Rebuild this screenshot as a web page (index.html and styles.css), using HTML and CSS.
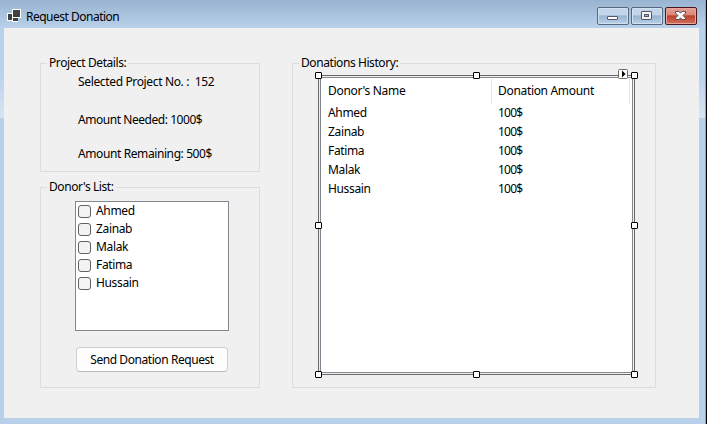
FILE: index.html
```html
<!DOCTYPE html>
<html lang="en">
<head>
<meta charset="utf-8">
<title>Request Donation</title>
<link rel="stylesheet" href="styles.css">
</head>
<body>
<div class="window">
  <header class="titlebar">
    <svg class="app-icon" width="14" height="13" viewBox="0 0 14 13" shape-rendering="crispEdges">
      <path fill="#fff" d="M5 0h9v9h-3v4H5v-1H0V4h5z"/>
      <path fill="#404040" d="M6 1h7v7H6zM1 5h4v6H1zM6 9h5v3H6z"/>
    </svg>
    <h1 class="title">Request Donation</h1>
    <div class="controls">
      <button class="control" aria-label="Minimize"><svg width="32" height="18" viewBox="0 0 32 18"><rect x="10.5" y="9.5" width="10" height="3" rx=".5" fill="#fff" stroke="#535666"/></svg></button>
      <button class="control" aria-label="Maximize"><svg width="32" height="18" viewBox="0 0 32 18"><rect x="10.5" y="4.5" width="10" height="8" rx=".5" fill="#f5f5f5" stroke="#535666"/><rect x="13.500" y="7.500" width="4" height="2" fill="#9cb8d8" stroke="#535666"/></svg></button>
      <button class="control close" aria-label="Close"><svg width="32" height="18" viewBox="0 0 32 18"><path d="M10.500 4.500h3.500l1.500 1.700 1.500-1.700h3.500v1.500l-2.500 2.500 2.500 2.500v1.500h-3.500l-1.500-1.700-1.500 1.700h-3.500v-1.500l2.500-2.500-2.500-2.500z" fill="#fff" stroke="#58505c"/></svg></button>
    </div>
  </header>
  <main class="client">
    <div class="column">
      <section class="group details">
        <h2 class="legend">Project Details:</h2>
        <p class="t-selected">Selected Project No. :&nbsp; 152</p>
        <p class="t-needed">Amount Needed: 1000$</p>
        <p class="t-remaining">Amount Remaining: 500$</p>
      </section>
      <section class="group donors">
        <h2 class="legend">Donor's List:</h2>
        <ul class="checklist">
          <li><i class="box"></i><span>Ahmed</span></li>
          <li><i class="box"></i><span>Zainab</span></li>
          <li><i class="box"></i><span>Malak</span></li>
          <li><i class="box"></i><span>Fatima</span></li>
          <li><i class="box"></i><span>Hussain</span></li>
        </ul>
        <button class="send"><span>Send Donation Request</span></button>
      </section>
    </div>
    <section class="group history">
      <h2 class="legend">Donations History:</h2>
      <div class="selection">
        <div class="listview">
          <div class="head"><span>Donor's Name</span><span>Donation Amount</span></div>
          <div class="row"><span>Ahmed</span><span class="amount">100$</span></div>
          <div class="row"><span>Zainab</span><span class="amount">100$</span></div>
          <div class="row"><span>Fatima</span><span class="amount">100$</span></div>
          <div class="row"><span>Malak</span><span class="amount">100$</span></div>
          <div class="row"><span>Hussain</span><span class="amount">100$</span></div>
        </div>
        <i class="handle top left"></i><i class="handle top center"></i><i class="handle top right"></i>
        <i class="handle middle left"></i><i class="handle middle right"></i>
        <i class="handle bottom left"></i><i class="handle bottom center"></i><i class="handle bottom right"></i>
        <svg class="tag" width="10" height="10" viewBox="0 0 10 10"><rect x=".5" y=".5" width="9" height="9" rx="1" fill="#fff" stroke="#6b6b60"/><path d="M4 1.500v7L7.500 5z" fill="#000"/></svg>
      </div>
    </section>
  </main>
</div>
</body>
</html>
```
FILE: styles.css
```css
* { box-sizing: border-box; margin: 0; padding: 0; }
body {
  width: 707px; height: 424px; overflow: hidden; background: #b9d0ea;
  font: 12px/16px "Noto Sans", "Open Sans", sans-serif; color: #000;
  letter-spacing: -0.35px; white-space: nowrap;
}
h1, h2 { font-size: 12px; font-weight: 400; }
ul { list-style: none; }
button { font: inherit; letter-spacing: inherit; color: inherit; }
.window {
  width: 707px; height: 424px; padding: 0 8px 6px 4px;
  background:
    linear-gradient(#000, #000) 706px 0 / 1px 100% no-repeat,
    linear-gradient(#3cc6e2, #3cc6e2) 705px 0 / 1px 100% no-repeat,
    linear-gradient(#99b4d1 0, #b9d1ea 28px, #bad2ec 75px, #d7e5f4 118px, #b9d0ea 118px);
}
.titlebar { height: 28px; display: flex; align-items: flex-start; }
.app-icon { margin: 9px 0 0 3px; }
.title { margin: 9px 0 0 5px; letter-spacing: -0.5px; }
.controls { display: flex; gap: 2px; margin: 7px 2px 0 auto; }
.control {
  width: 32px; height: 18px; border: 1px solid #56677e; border-radius: 2px;
  box-shadow: inset 0 0 0 1px #d3e2f1;
  background: linear-gradient(#c3d5e8 0 45%, #98b3cf 48%, #bad1e8);
}
.control svg { display: block; margin: -1px; }
.control.close {
  border-color: #4c1520; box-shadow: inset 0 0 0 1px #e7a79c;
  background: linear-gradient(#e3a298 0, #d98575 45%, #b9402b 48%, #d3705b);
}
.client { width: 695px; height: 390px; padding: 35px 43px 30px 36px; background: #f0f0f0; display: flex; gap: 32px; }
.column { width: 220px; display: flex; flex-direction: column; gap: 15px; }
.group { border: 1px solid #dcdcdc; }
.legend { width: fit-content; height: 16px; margin: -9px 0 0 6px; padding: 0 2px; background: #f0f0f0; letter-spacing: -0.42px; }
.details { height: 109px; }
.details p { margin-left: 37px; }
.t-selected { margin-top: 3px; }
.t-needed { margin-top: 22px; letter-spacing: -0.45px; }
.t-remaining { margin-top: 18px; letter-spacing: -0.4px; }
.donors { height: 201px; }
.checklist { width: 154px; height: 130px; margin: 6px 0 0 34px; padding: 0 2px; background: #fff; border: 1px solid #828790; }
.checklist li { height: 18px; display: flex; align-items: center; gap: 5px; }
.box { width: 13px; height: 13px; border: 1px solid #626262; border-radius: 3px; background: #f3f3f3; }
.send { display: block; width: 152px; height: 25px; margin: 16px 0 0 35px; background: #fdfdfd; border: 1px solid #d0d0d0; border-bottom-color: #bababa; border-radius: 4px; letter-spacing: -0.43px; }
.history { width: 364px; height: 325px; }
.selection { position: relative; width: 317px; height: 300px; margin: 4px 0 0 25px; border: 1px solid #696969; padding: 1px; }
.listview { height: 296px; background: #fff; border: 1px solid #828790; }
.head, .row { display: grid; grid-template-columns: 171px 138px; }
.head { height: 26px; padding-top: 1px; letter-spacing: -0.32px; }
.head span { border-right: 1px solid #e5e5e5; padding: 4px 0 0 7px; }
.row { height: 19px; padding-top: 1px; }
.row span { padding-left: 7px; }
.head span + span, .row span + span { padding-left: 6px; }
.amount { letter-spacing: -0.8px; }
.handle { position: absolute; width: 7px; height: 7px; background: #fff; border: 1px solid #000; border-radius: 1px; }
.top { top: -4px; }
.middle { top: 146px; }
.bottom { bottom: -4px; }
.left { left: -4px; }
.center { left: 154px; }
.right { right: -4px; }
.tag { position: absolute; left: 299px; top: -7px; }
```
